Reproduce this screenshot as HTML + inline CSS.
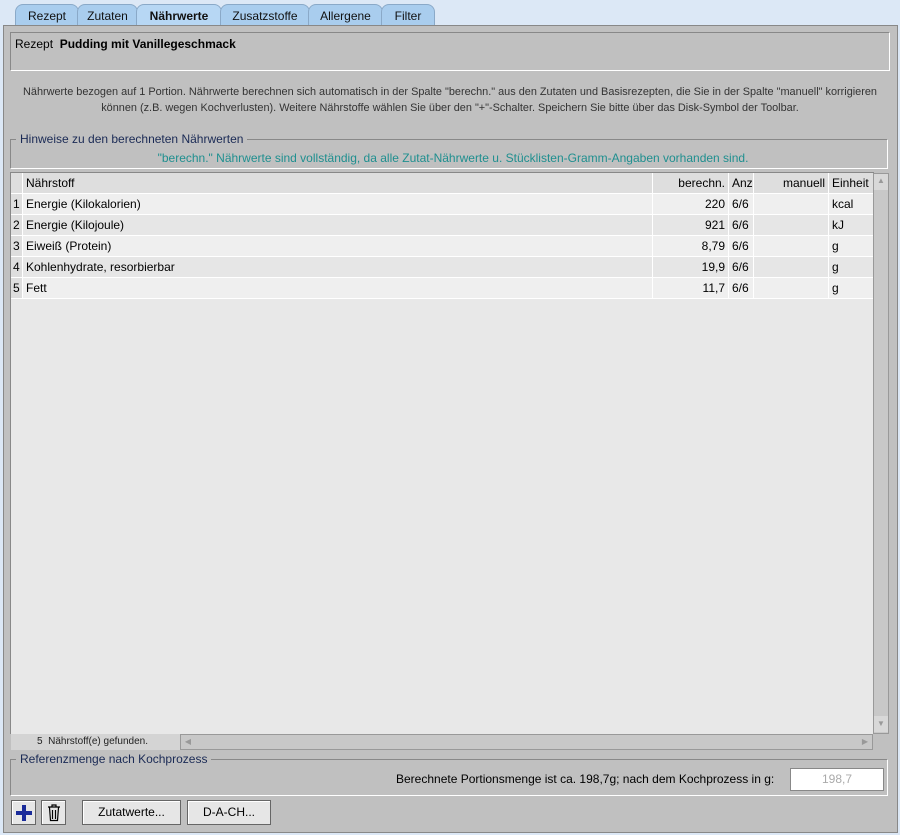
<!DOCTYPE html>
<html><head><meta charset="utf-8"><style>
*{margin:0;padding:0;box-sizing:border-box}
body{width:900px;height:835px;background:#dce8f6;font-family:"Liberation Sans",Arial,sans-serif;font-size:12px;color:#000;position:relative;overflow:hidden}
.a{position:absolute}
.tab{position:absolute;top:4px;height:22px;background:#a9cdee;border:1px solid #8aa9c8;border-bottom:none;border-radius:8px 8px 0 0;text-align:center;line-height:22px;font-size:12px;color:#111}
.cell{position:absolute;height:21px;line-height:21px;border-right:1px solid #fff;border-bottom:1px solid #fff;padding:0 3px;white-space:nowrap;overflow:hidden}
.btn{position:absolute;top:800px;height:25px;background:#e6e6e6;border:1px solid #666;box-shadow:inset 1px 1px #fff;text-align:center;line-height:23px}
</style></head><body>
<div class="tab" style="left:15px;width:64px">Rezept</div>
<div class="tab" style="left:77px;width:61px">Zutaten</div>
<div class="tab" style="left:136px;width:86px;font-weight:bold;background:#b7d7f4">Nährwerte</div>
<div class="tab" style="left:220px;width:90px">Zusatzstoffe</div>
<div class="tab" style="left:308px;width:75px">Allergene</div>
<div class="tab" style="left:381px;width:54px">Filter</div>

<div class="a" style="left:3px;top:25px;width:895px;height:808px;background:#c0c0c0;border:1px solid #888"></div>
<div class="a" style="left:10px;top:32px;width:880px;height:39px;border:1px solid #888;border-right-color:#fff;border-bottom-color:#fff;padding:4px 4px">Rezept&nbsp; <b>Pudding mit Vanillegeschmack</b></div>
<div class="a" style="left:0px;top:84px;width:900px;text-align:center;font-size:10.9px;color:#333;line-height:16px">Nährwerte bezogen auf 1 Portion. Nährwerte berechnen sich automatisch in der Spalte "berechn." aus den Zutaten und Basisrezepten, die Sie in der Spalte "manuell" korrigieren<br>können (z.B. wegen Kochverlusten). Weitere Nährstoffe wählen Sie über den "+"-Schalter. Speichern Sie bitte über das Disk-Symbol der Toolbar.</div>

<div class="a" style="left:10px;top:139px;width:878px;height:30px;border:1px solid #888;border-right-color:#fff;border-bottom-color:#fff"></div>
<div class="a" style="left:16px;top:132px;background:#c0c0c0;padding:0 4px;color:#1a2a55;font-size:12px">Hinweise zu den berechneten Nährwerten</div>
<div class="a" style="left:14px;top:151px;width:878px;text-align:center;color:#1f8f8f;font-size:12px">"berechn." Nährwerte sind vollständig, da alle Zutat-Nährwerte u. Stücklisten-Gramm-Angaben vorhanden sind.</div>

<div class="a" style="left:10px;top:172px;width:864px;height:562px;background:#e8e8e8;border-left:1px solid #888;border-top:1px solid #888"></div>
<div class="cell" style="left:11px;top:173px;width:12px;background:#dedede"></div>
<div class="cell" style="left:23px;top:173px;width:630px;background:#dedede">Nährstoff</div>
<div class="cell" style="left:653px;top:173px;width:76px;background:#dedede;text-align:right">berechn.</div>
<div class="cell" style="left:729px;top:173px;width:25px;background:#dedede">Anz</div>
<div class="cell" style="left:754px;top:173px;width:75px;background:#dedede;text-align:right">manuell</div>
<div class="cell" style="left:829px;top:173px;width:45px;background:#dedede">Einheit</div>
<div id="rows"></div>
<script>
var d=[["Energie (Kilokalorien)","220","kcal"],["Energie (Kilojoule)","921","kJ"],["Eiweiß (Protein)","8,79","g"],["Kohlenhydrate, resorbierbar","19,9","g"],["Fett","11,7","g"]];
var h="";d.forEach(function(r,i){var t=194+i*21,bg=i%2?"#e6e6e6":"#efefef";
h+='<div class="cell" style="left:11px;top:'+t+'px;width:12px;background:#dedede;padding:0 2px">'+(i+1)+'</div>'+
'<div class="cell" style="left:23px;top:'+t+'px;width:630px;background:'+bg+'">'+r[0]+'</div>'+
'<div class="cell" style="left:653px;top:'+t+'px;width:76px;background:'+bg+';text-align:right">'+r[1]+'</div>'+
'<div class="cell" style="left:729px;top:'+t+'px;width:25px;background:'+bg+'">6/6</div>'+
'<div class="cell" style="left:754px;top:'+t+'px;width:75px;background:'+bg+'"></div>'+
'<div class="cell" style="left:829px;top:'+t+'px;width:45px;background:'+bg+'">'+r[2]+'</div>';});
document.getElementById("rows").innerHTML=h;
</script>
<div class="a" style="left:873px;top:173px;width:16px;height:561px;background:#c8c8c8;border:1px solid #999"></div>
<div class="a" style="left:874px;top:174px;width:14px;height:16px;background:#d8d8d8;color:#999;font-size:8px;text-align:center;line-height:14px">▲</div>
<div class="a" style="left:874px;top:716px;width:14px;height:16px;background:#d8d8d8;color:#999;font-size:8px;text-align:center;line-height:16px">▼</div>
<div class="a" style="left:11px;top:734px;width:169px;height:16px;background:#d4d4d4;font-size:10px;color:#222;line-height:16px;padding-left:26px">5&nbsp; Nährstoff(e) gefunden.</div>
<div class="a" style="left:180px;top:734px;width:693px;height:16px;background:#c8c8c8;border:1px solid #999"></div>
<div class="a" style="left:181px;top:735px;width:14px;height:14px;color:#999;font-size:8px;line-height:14px;text-align:center">◀</div>
<div class="a" style="left:858px;top:735px;width:14px;height:14px;color:#999;font-size:8px;line-height:14px;text-align:center">▶</div>

<div class="a" style="left:10px;top:759px;width:878px;height:37px;border:1px solid #888;border-right-color:#fff;border-bottom-color:#fff"></div>
<div class="a" style="left:16px;top:752px;background:#c0c0c0;padding:0 4px;color:#1a2a55">Referenzmenge nach Kochprozess</div>
<div class="a" style="left:396px;top:772px">Berechnete Portionsmenge ist ca. 198,7g; nach dem Kochprozess in g:</div>
<div class="a" style="left:790px;top:768px;width:94px;height:23px;background:#fff;border:1px solid #888;color:#aaa;text-align:center;line-height:21px">198,7</div>

<div class="btn" style="left:11px;width:25px"><svg width="20" height="20" viewBox="0 0 20 20" style="margin-top:2px"><path d="M10 2v16M2 10h16" stroke="#1a2b9a" stroke-width="4"/></svg></div>
<div class="btn" style="left:41px;width:25px"><svg width="14" height="18" viewBox="0 0 14 18" style="margin-top:3px"><path d="M1 3h12M5 3V1h4v2M2.5 3.5l1 13h7l1-13M5.5 6v9M8.5 6v9" stroke="#000" fill="none" stroke-width="1.2"/></svg></div>
<div class="btn" style="left:82px;width:99px">Zutatwerte...</div>
<div class="btn" style="left:187px;width:84px">D-A-CH...</div>
</body></html>
